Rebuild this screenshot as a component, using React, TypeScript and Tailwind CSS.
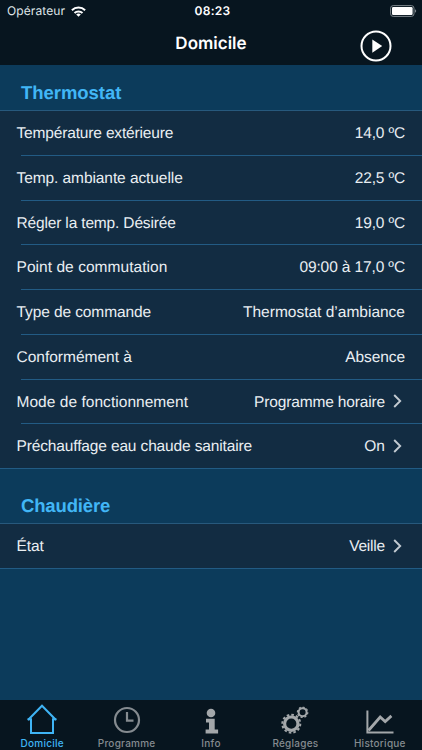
import { ReactNode, useState } from "react";

interface RowData {
  label: string;
  value: string;
  labelClass?: string;
  valueClass?: string;
  link?: boolean;
}

const thermostatRows: RowData[] = [
  {
    label: "Température extérieure",
    value: "14,0 ºC",
    labelClass: "tracking-[-0.16px]",
    valueClass: "tracking-[-0.15px]",
  },
  {
    label: "Temp. ambiante actuelle",
    value: "22,5 ºC",
    labelClass: "tracking-[-0.08px]",
    valueClass: "tracking-[-0.15px]",
  },
  {
    label: "Régler la temp. Désirée",
    value: "19,0 ºC",
    labelClass: "tracking-[-0.16px]",
    valueClass: "tracking-[-0.15px]",
  },
  {
    label: "Point de commutation",
    value: "09:00 à 17,0 ºC",
    labelClass: "tracking-[0.05px]",
    valueClass: "tracking-[-0.12px]",
  },
  {
    label: "Type de commande",
    value: "Thermostat d’ambiance",
    labelClass: "tracking-[-0.1px]",
  },
  { label: "Conformément à", value: "Absence", valueClass: "tracking-[-0.08px]" },
  {
    label: "Mode de fonctionnement",
    value: "Programme horaire",
    labelClass: "tracking-[0.04px]",
    valueClass: "tracking-[-0.15px]",
    link: true,
  },
  {
    label: "Préchauffage eau chaude sanitaire",
    value: "On",
    labelClass: "tracking-[-0.14px]",
    link: true,
  },
];

const boilerRows: RowData[] = [
  {
    label: "État",
    value: "Veille",
    labelClass: "tracking-[-0.1px]",
    valueClass: "tracking-[-0.2px]",
    link: true,
  },
];

const StatusBar = () => {
  return (
    <div className="grid h-[22px] grid-cols-3 items-center text-white">
      <div className="flex items-center gap-[6px] pl-[7px]">
        <span className="font-['Inter',sans-serif] text-[12px] tracking-[0.1px] text-[#dfe4e8]">
          Opérateur
        </span>
        <svg width="15" height="11" viewBox="0 0 15 11" fill="none" stroke="#fff" strokeWidth="2">
          <path d="M0.9 4.2a9.4 9.4 0 0 1 13.2 0" />
          <path d="M3.5 7a5.8 5.8 0 0 1 8 0" />
          <path d="M7.5 10.8L5.2 8.5a3.3 3.3 0 0 1 4.6 0z" fill="#fff" stroke="none" />
        </svg>
      </div>
      <span className="pl-[3px] text-center font-['Inter',sans-serif] text-[12px] font-semibold tracking-[0.3px]">
        08:23
      </span>
      <div className="flex justify-end pr-[5px]">
        <svg width="27" height="12" viewBox="0 0 27 12">
          <rect x="0.6" y="0.6" width="23.4" height="10.8" rx="2.6" fill="none" stroke="#7d868c" />
          <rect x="2" y="2" width="20.6" height="8" rx="1.2" fill="#fff" />
          <path d="M25 4.2c1.6.7 1.6 2.9 0 3.6z" fill="#7d868c" />
        </svg>
      </div>
    </div>
  );
};

const NavBar = () => {
  return (
    <div className="grid h-[43px] grid-cols-3 items-center">
      <h1 className="col-start-2 pt-[2px] text-center font-['Inter',sans-serif] text-[17px] font-semibold text-white">
        Domicile
      </h1>
      <div className="flex justify-end pt-[5px] pr-[30px]">
        <svg width="32" height="32" viewBox="0 0 32 32">
          <circle cx="16" cy="16" r="14.5" fill="none" stroke="#fff" strokeWidth="2" />
          <path d="M12.3 9.5v13.2L22.2 16.1z" fill="#fff" />
        </svg>
      </div>
    </div>
  );
};

interface SectionProps {
  title: string;
  headerClass: string;
  rows: RowData[];
}

const Section = ({ title, headerClass, rows }: SectionProps) => {
  return (
    <section>
      <h2
        className={`flex items-end border-b border-[#27597d] pb-[5px] pl-[21px] text-[18.5px] leading-6 font-bold text-[#41b6f6] ${headerClass}`}
      >
        {title}
      </h2>
      <div className="border-b border-[#225b84] bg-[#122c42]">
        {rows.map((row, index) => (
          <div key={row.label}>
            {index > 0 && <div className="ml-[21px] h-px bg-[#225b84]" />}
            <div className="flex h-[43.75px] items-center justify-between pr-[17px] pl-[16.5px] text-[15.5px] text-[#e9eef2]">
              <span className={`pt-[1.5px] ${row.labelClass ?? ""}`}>{row.label}</span>
              <span className="flex items-center">
                <span className={`pt-[1.5px] ${row.valueClass ?? ""}`}>{row.value}</span>
                {row.link && (
                  <svg
                    className="mr-[3px] ml-[8px]"
                    width="9"
                    height="14"
                    viewBox="0 0 9 14"
                    fill="none"
                    stroke="#c2cad1"
                    strokeWidth="1.9"
                  >
                    <path d="M1.2 1l6 6-6 6" />
                  </svg>
                )}
              </span>
            </div>
          </div>
        ))}
      </div>
    </section>
  );
};

const HomeIcon = () => (
  <svg width="32" height="32" viewBox="0 0 32 32" fill="none" stroke="currentColor" strokeWidth="2">
    <path d="M2 17L16 2.7L30 17" />
    <path d="M1.6 16.3H5V30H27V16.3H30.4" />
  </svg>
);

const ClockIcon = () => (
  <svg width="32" height="32" viewBox="0 0 32 32" fill="none" stroke="currentColor" strokeWidth="2.2">
    <circle cx="16" cy="17" r="12" />
    <path d="M16 9v8.7h6.5" />
  </svg>
);

const InfoIcon = () => (
  <svg className="text-[#a3a7aa]" width="32" height="32" viewBox="0 0 32 32" fill="currentColor">
    <circle cx="16" cy="10" r="4.3" />
    <path d="M11 15.8h8.7v10.6h3.4v4H10.6v-4H14v-6.8h-3z" />
  </svg>
);

const GearsIcon = () => (
  <svg className="text-[#a3a7aa]" width="32" height="32" viewBox="0 0 32 32" fill="none" stroke="currentColor">
    <circle cx="12.3" cy="20.7" r="6.7" strokeWidth="3.2" />
    <circle cx="12.3" cy="20.7" r="9" strokeWidth="2" pathLength="48" strokeDasharray="2.2 1.8" />
    <circle cx="23.6" cy="9.3" r="4" strokeWidth="2" />
    <circle cx="23.6" cy="9.3" r="5.2" strokeWidth="1.2" pathLength="32" strokeDasharray="2.1 1.9" />
  </svg>
);

const ChartIcon = () => (
  <svg className="text-[#a3a7aa]" width="32" height="32" viewBox="0 0 32 32" fill="none" stroke="currentColor">
    <path d="M3.4 7.5v21.9h26.1" strokeWidth="2" />
    <path d="M4.5 27.5L16.2 14l5 4.5 6.2-5.6" strokeWidth="2.8" />
  </svg>
);

interface TabItemProps {
  label: string;
  icon: ReactNode;
  active: boolean;
  onClick: () => void;
}

const TabItem = ({ label, icon, active, onClick }: TabItemProps) => {
  return (
    <button
      className={`flex flex-1 flex-col items-center pt-[3px] ${
        active ? "text-[#3fb4f5]" : "text-[#858b90]"
      }`}
      onClick={onClick}
    >
      {icon}
      <span className="mt-px font-['Inter',sans-serif] text-[10px] leading-[14px] font-medium tracking-[0.25px]">
        {label}
      </span>
    </button>
  );
};

const tabs = [
  { label: "Domicile", icon: <HomeIcon /> },
  { label: "Programme", icon: <ClockIcon /> },
  { label: "Info", icon: <InfoIcon /> },
  { label: "Réglages", icon: <GearsIcon /> },
  { label: "Historique", icon: <ChartIcon /> },
];

const App = () => {
  const [activeTab, setActiveTab] = useState<number>(0);

  return (
    <div className="flex h-[750px] w-[422px] flex-col overflow-hidden bg-[#0c3b5b] font-['Liberation_Sans',sans-serif] [text-rendering:geometricPrecision]">
      <header className="bg-[#07151f]">
        <StatusBar />
        <NavBar />
      </header>
      <main className="flex-1">
        <Section title="Thermostat" headerClass="h-[46px] tracking-[-0.05px]" rows={thermostatRows} />
        <Section title="Chaudière" headerClass="h-[55px] tracking-[-0.15px]" rows={boilerRows} />
      </main>
      <nav className="flex h-[50px] bg-[#07151f]">
        {tabs.map((tab, index) => (
          <TabItem
            key={tab.label}
            label={tab.label}
            icon={tab.icon}
            active={activeTab === index}
            onClick={() => setActiveTab(index)}
          />
        ))}
      </nav>
    </div>
  );
};

export default App;
